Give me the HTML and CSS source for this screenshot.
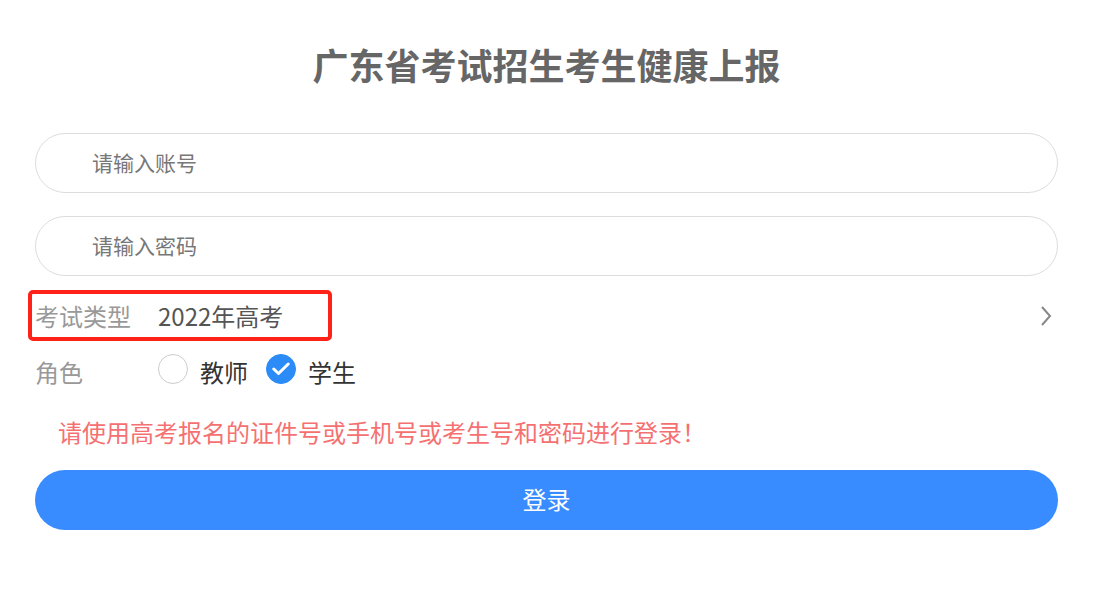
FILE: index.html
```html
<!DOCTYPE html>
<html lang="zh-CN">
<head>
    <meta charset="UTF-8">
    <meta name="viewport" content="width=device-width, initial-scale=1.0">
    <title>广东省考试招生考生健康上报</title>
    <link rel="stylesheet" href="styles.css">
</head>
<body>
    <div class="login-wrapper">
        <h1 class="title">广东省考试招生考生健康上报</h1>

        <div class="field">
            <input type="text" placeholder="请输入账号">
        </div>
        <div class="field field-gap">
            <input type="password" placeholder="请输入密码">
        </div>

        <div class="form-row exam-row">
            <span class="row-label">考试类型</span>
            <span class="row-value">2022年高考</span>
            <svg class="chevron" width="12" height="20" viewBox="0 0 12 20">
                <polyline points="2,1 10,10 2,19"></polyline>
            </svg>
            <span class="mark-box"></span>
        </div>

        <div class="form-row role-row">
            <span class="row-label">角色</span>
            <label class="radio-item">
                <span class="radio"></span>
                <span>教师</span>
            </label>
            <label class="radio-item">
                <span class="radio checked">
                    <svg width="18" height="14" viewBox="0 0 18 14"><polyline points="1.8,7 6.5,11.5 16.2,2"></polyline></svg>
                </span>
                <span>学生</span>
            </label>
        </div>

        <p class="hint">请使用高考报名的证件号或手机号或考生号和密码进行登录！</p>

        <button class="btn-login">登录</button>
    </div>
</body>
</html>
```

FILE: styles.css
```css
*{
    margin: 0;
    padding: 0;
    box-sizing: border-box;
}

body{
    background: #ffffff;
    font-family: "Noto Sans CJK SC", "Noto Sans", sans-serif;
    color: #333333;
}

.login-wrapper{
    padding: 0 35px;
}

.title{
    margin-top: 43px;
    margin-bottom: 48px;
    height: 42px;
    line-height: 42px;
    text-align: center;
    font-size: 36px;
    font-weight: bold;
    color: #666666;
}

.field{
    height: 60px;
    border: 1px solid #dddddd;
    border-radius: 30px;
    padding-left: 56px;
    display: flex;
    align-items: center;
}

.field-gap{
    margin-top: 23px;
}

.field input{
    width: 100%;
    border: none;
    outline: none;
    background: transparent;
    font-family: inherit;
    font-size: 21px;
    color: #333333;
    margin-top: -3px;
}

.field input::placeholder{
    color: #777777;
}

.form-row{
    height: 55px;
    padding-bottom: 4px;
    display: flex;
    align-items: center;
    font-size: 24px;
    position: relative;
}

.exam-row{
    margin-top: 14px;
}

.role-row{
    padding-bottom: 2px;
}

.row-label{
    width: 123px;
    color: #999999;
}

.row-value{
    color: #555555;
}

.chevron{
    margin-left: auto;
    margin-right: 6px;
}

.chevron polyline{
    fill: none;
    stroke: #888888;
    stroke-width: 2;
}

.mark-box{
    position: absolute;
    left: -7px;
    top: 0;
    width: 304px;
    height: 51px;
    border: 4px solid #ff2219;
    border-radius: 5px;
}

.radio-item{
    display: flex;
    align-items: center;
    margin-right: 18px;
    color: #333333;
}

.radio{
    width: 30px;
    height: 30px;
    border: 1px solid #cccccc;
    border-radius: 50%;
    margin-right: 12px;
    margin-bottom: 6px;
    display: flex;
    align-items: center;
    justify-content: center;
}

.radio.checked{
    background: #2b8cf7;
    border-color: #2b8cf7;
}

.radio svg polyline{
    fill: none;
    stroke: #ffffff;
    stroke-width: 3;
    stroke-linecap: round;
    stroke-linejoin: round;
}

.hint{
    margin-top: 14px;
    padding-left: 23px;
    height: 40px;
    line-height: 36px;
    font-size: 24px;
    color: #f57171;
}

.btn-login{
    display: block;
    width: 100%;
    margin-top: 16px;
    height: 60px;
    border: none;
    border-radius: 30px;
    background: #398cff;
    color: #ffffff;
    font-family: inherit;
    font-size: 24px;
    padding-bottom: 3px;
}
```
